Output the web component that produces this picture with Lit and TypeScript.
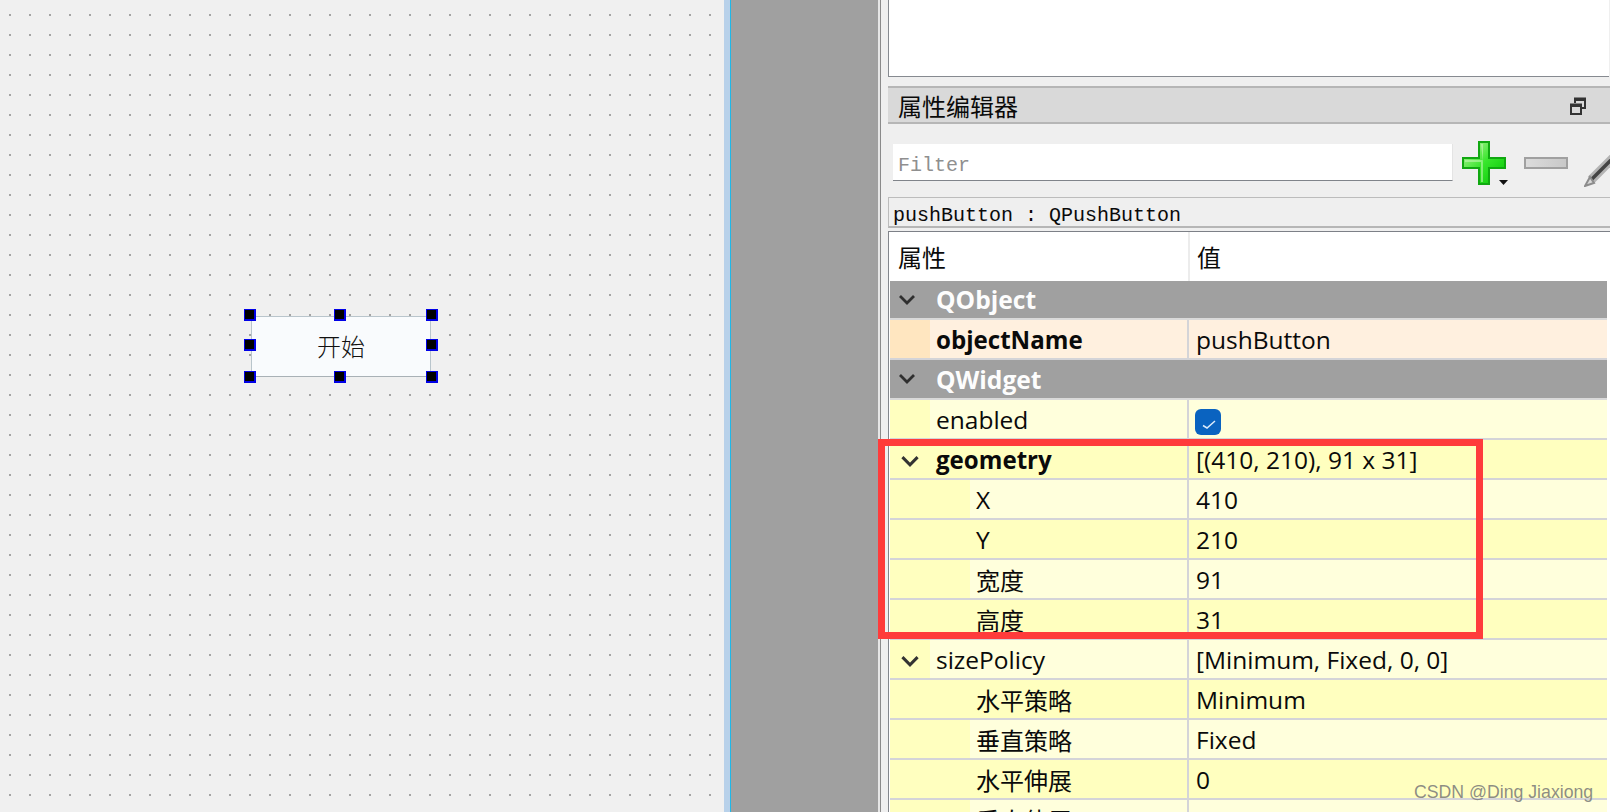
import { LitElement, html, css } from "lit";
import { customElement } from "lit/decorators.js";

type Row = {
  kind: "group" | "prop";
  name: string;
  value?: string;
  level?: number;
  bold?: boolean;
  dark?: boolean;
  orange?: boolean;
  open?: boolean;
  check?: boolean;
};

const ROWS: Row[] = [
  { kind: "group", name: "QObject" },
  { kind: "prop", name: "objectName", value: "pushButton", bold: true, orange: true },
  { kind: "group", name: "QWidget" },
  { kind: "prop", name: "enabled", check: true },
  { kind: "prop", name: "geometry", value: "[(410, 210), 91 x 31]", bold: true, dark: true, open: true },
  { kind: "prop", name: "X", value: "410", level: 1 },
  { kind: "prop", name: "Y", value: "210", level: 1, dark: true },
  { kind: "prop", name: "宽度", value: "91", level: 1 },
  { kind: "prop", name: "高度", value: "31", level: 1, dark: true },
  { kind: "prop", name: "sizePolicy", value: "[Minimum, Fixed, 0, 0]", open: true },
  { kind: "prop", name: "水平策略", value: "Minimum", level: 1, dark: true },
  { kind: "prop", name: "垂直策略", value: "Fixed", level: 1 },
  { kind: "prop", name: "水平伸展", value: "0", level: 1, dark: true },
  { kind: "prop", name: "垂直伸展", value: "0", level: 1 },
];

const HANDLES: [number, number][] = [
  [244, 309], [334, 309], [426, 309],
  [244, 339], [426, 339],
  [244, 371], [334, 371], [426, 371],
];

const chevron = (group = false) => html`<svg class=${group ? "chev" : "chev big"} width="18" height="12" viewBox="0 0 18 12">
  <path d="M2 2 L9 9 L16 2" fill="none" stroke=${group ? "#2f2f2f" : "#333"} stroke-width="2.8"/>
</svg>`;

@customElement("app-root")
export class AppRoot extends LitElement {
  static styles = css`
    :host {
      display: block;
      width: 1610px;
      height: 812px;
      overflow: hidden;
      position: relative;
      font-family: "Open Sans", "Noto Sans CJK SC", sans-serif;
      background: #efefef;
    }
    .app { display: flex; height: 812px; }
    .canvas {
      width: 724px;
      flex: none;
      position: relative;
      background-color: #f0f0f0;
    }
    .canvas::before {
      content: "";
      position: absolute;
      inset: 0;
      background: repeating-linear-gradient(90deg, transparent 0 9px, #a4a4a4 9px 11px, transparent 11px 20px);
      -webkit-mask-image: repeating-linear-gradient(180deg, transparent 0 14px, #000 14px 16px, transparent 16px 20px);
      mask-image: repeating-linear-gradient(180deg, transparent 0 14px, #000 14px 16px, transparent 16px 20px);
    }
    .btn {
      position: absolute;
      left: 251px;
      top: 316px;
      width: 180px;
      height: 61px;
      box-sizing: border-box;
      border: 1px solid #b9c5cc;
      border-bottom-color: #a9b1b6;
      background: #f9fbfd;
      display: flex;
      align-items: center;
      justify-content: center;
      padding-bottom: 3px;
      font: 300 24px "Noto Sans CJK SC", sans-serif;
      color: #111;
    }
    .handle {
      position: absolute;
      width: 12px;
      height: 12px;
      box-sizing: border-box;
      background: #000;
      border: 1px solid #0000e6;
      border-right-width: 2px;
      border-bottom-width: 2px;
    }
    .splitter {
      width: 6px;
      flex: none;
      background: #b8d1ea;
      border-right: 1px solid #1fb8e8;
    }
    .mdi {
      width: 147px;
      flex: none;
      background: #a0a0a0;
    }
    .panel {
      flex: 1;
      min-width: 0;
      box-sizing: border-box;
      border-left: 2px solid #e6e6e6;
      padding-left: 8px;
      display: flex;
      flex-direction: column;
      box-shadow: inset 1px 0 0 #8a8a8a;
    }
    .topbox {
      height: 77px;
      flex: none;
      background: #fff;
      border: 1px solid #868a90;
      border-top: 0;
      border-right-width: 0;
      box-sizing: border-box;
      margin-right: 1px;
    }
    .title {
      margin-top: 9px;
      height: 38px;
      flex: none;
      box-sizing: border-box;
      background: #d9d9d9;
      border-top: 2px solid #b6b6b6;
      border-bottom: 2px solid #b6b6b6;
      display: flex;
      align-items: center;
      justify-content: space-between;
      padding: 0 24px 0 10px;
      font: 400 24px "Noto Sans CJK SC", sans-serif;
      color: #0a0a0a;
    }
    .title svg { display: block; margin-top: 2px; }
    .toolbar {
      height: 73px;
      flex: none;
      display: flex;
      align-items: flex-start;
      box-sizing: border-box;
      padding-top: 17px;
      overflow: hidden;
    }
    .filter {
      flex: none;
      margin: 3px 0 0 5px;
      width: 560px;
      height: 37px;
      box-sizing: border-box;
      background: #fff;
      border-bottom: 1px solid #80848a;
      border-right: 1px solid #e4e4e4;
      font: 20px "Liberation Mono", monospace;
      color: #8f8f8f;
      padding: 9px 0 0 5px;
      line-height: 26px;
    }
    .icons { display: flex; flex: none; align-items: flex-start; margin-left: 9px; }
    .plus { width: 46px; height: 46px; display: block; flex: none; }
    .minus { width: 44px; height: 12px; margin: 16px 0 0 16px; display: block; flex: none; }
    .pencil { width: 30px; height: 32px; margin: 14px 0 0 16px; display: block; flex: none; }
    .objname {
      height: 31px;
      flex: none;
      box-sizing: border-box;
      border: 1px solid #bcbcbc;
      border-right: 0;
      border-bottom: 2px solid #b6b6b6;
      font: 20px/36px "Liberation Mono", monospace;
      color: #0a0a0a;
      padding-left: 4px;
      white-space: pre;
    }
    .table {
      flex: 1;
      min-height: 0;
      margin-top: 3px;
      background: #fff;
      border-top: 1px solid #7d8087;
      border-left: 1px solid #83868c;
      padding-left: 1px;
      overflow: hidden;
      display: flex;
      flex-direction: column;
    }
    .thead {
      height: 49px;
      flex: none;
      display: flex;
      font: 400 24px "Noto Sans CJK SC", sans-serif;
      color: #0a0a0a;
      margin-right: 3px;
    }
    .thead div { display: flex; align-items: center; box-sizing: border-box; }
    .thead .c1 { width: 300px; padding-left: 8px; border-right: 2px solid #ececec; }
    .thead .c2 { flex: 1; padding-left: 7px; }
    .row {
      height: 40px;
      flex: none;
      box-sizing: border-box;
      display: flex;
      border-bottom: 2px solid #d4d4d8;
      font-size: 24.5px;
      color: #0a0a0a;
      background: #ffffdc;
      margin-right: 3px;
    }
    .row.first { height: 39px; }
    .row.dark { background: #ffffbf; }
    .row.orange { background: #fff0df; }
    .row.group {
      background: #a0a0a0;
      color: #fdfdfd;
      font-weight: 700;
      font-size: 24.6px;
      border-bottom-color: #d9d9d9;
    }
    .gut {
      flex: none;
      display: flex;
      align-items: center;
      justify-content: flex-start;
      background: #ffffbf;
      width: 40px;
      padding-left: 8px;
      box-sizing: border-box;
    }
    .chev.big { margin: 4px 0 0 2px; width: 20px; height: 13px; }
    .row.orange .gut { background: #ffe6c0; }
    .row.group .gut { background: transparent; }
    .gut.l1 { width: 80px; }
    .name {
      flex: none;
      box-sizing: border-box;
      width: 259px;
      padding: 2px 0 0 6px;
      display: flex;
      align-items: center;
      line-height: 1;
      white-space: nowrap;
      border-right: 2px solid #d4d4d8;
    }
    .gut.l1 + .name { width: 219px; }
    .row.group .name { border-right: 0; flex: 1; }
    .bold { font-weight: 700; font-size: 24.1px; }
    .val {
      flex: 1;
      display: flex;
      align-items: center;
      padding-left: 7px;
      white-space: nowrap;
    }
    .cjk { font-family: "Noto Sans CJK SC", sans-serif; font-size: 24px; padding-top: 2px; }
    .check {
      width: 26px;
      height: 26px;
      border-radius: 6px;
      background: #0a63c0;
      display: flex;
      align-items: center;
      justify-content: center;
      margin: 6px 0 0 -1px;
    }
    .check svg { margin: 5px 0 0 2px; }
    .annot {
      position: absolute;
      left: 878px;
      top: 439px;
      width: 605px;
      height: 200px;
      box-sizing: border-box;
      border: 7px solid #ff3b3b;
      pointer-events: none;
    }
    .mark {
      position: absolute;
      left: 1414px;
      top: 782px;
      font: 17.7px "Liberation Sans", sans-serif;
      color: rgba(120, 120, 120, 0.85);
      white-space: nowrap;
    }
  `;

  private isCjk(s: string) {
    return /[\u4e00-\u9fff]/.test(s);
  }

  private renderRow(r: Row, i: number) {
    if (r.kind === "group") {
      return html`<div class="row group ${i === 0 ? "first" : ""}">
        <div class="gut">${chevron(true)}</div>
        <div class="name">${r.name}</div>
      </div>`;
    }
    const cls = `row ${r.dark ? "dark" : ""} ${r.orange ? "orange" : ""}`;
    return html`<div class=${cls}>
      <div class="gut ${r.level ? "l1" : ""}">${r.open ? chevron() : ""}</div>
      <div class="name ${r.bold ? "bold" : ""} ${this.isCjk(r.name) ? "cjk" : ""}">${r.name}</div>
      <div class="val">
        ${r.check
          ? html`<div class="check"><svg width="14" height="9" viewBox="0 0 14 9"><path d="M1 5.5 L5 8 L13 1" fill="none" stroke="#dcebfa" stroke-width="1.5"/></svg></div>`
          : r.value}
      </div>
    </div>`;
  }

  render() {
    return html`
      <div class="app">
        <div class="canvas">
          <div class="btn">开始</div>
          ${HANDLES.map(
            ([x, y]) => html`<div class="handle" style="left:${x}px;top:${y}px"></div>`
          )}
        </div>
        <div class="splitter"></div>
        <div class="mdi"></div>
        <div class="panel">
          <div class="topbox"></div>
          <div class="title">
            <span>属性编辑器</span>
            <svg width="16" height="18" viewBox="0 0 16 18">
              <path d="M5 6V1.5H15V11H12" fill="none" stroke="#333" stroke-width="2"/>
              <path d="M5 2.5H15" stroke="#333" stroke-width="3"/>
              <rect x="1" y="7.5" width="10" height="9.5" fill="none" stroke="#333" stroke-width="2"/>
              <path d="M1 8.5H11" stroke="#333" stroke-width="3"/>
            </svg>
          </div>
          <div class="toolbar">
            <div class="filter">Filter</div>
            <div class="icons">
              <svg class="plus" viewBox="0 0 46 46">
                <defs>
                  <linearGradient id="pg" x1="0" y1="0" x2="1" y2="1">
                    <stop offset="0" stop-color="#c4f4a8"/>
                    <stop offset="0.5" stop-color="#38e62c"/>
                    <stop offset="1" stop-color="#00c400"/>
                  </linearGradient>
                </defs>
                <path d="M17 1H27V17H43V27H27V43H17V27H1V17H17Z" fill="url(#pg)" stroke="#10a810" stroke-width="2"/>
                <path d="M19 3H21V19H3V21H19V41H21V21H21Z" fill="#c8f8b8" opacity="0.55"/>
                <path d="M37 39H46L41.5 44Z" fill="#111"/>
              </svg>
              <svg class="minus" viewBox="0 0 44 12">
                <defs>
                  <linearGradient id="mg" x1="0" y1="0" x2="1" y2="0">
                    <stop offset="0" stop-color="#dcdcdc"/>
                    <stop offset="1" stop-color="#c8c8c8"/>
                  </linearGradient>
                </defs>
                <rect x="1" y="1" width="42" height="10" fill="url(#mg)" stroke="#a0a0a0" stroke-width="2"/>
              </svg>
              <svg class="pencil" viewBox="0 0 30 32">
                <path d="M30 2 L7 25" stroke="#b4b4b4" stroke-width="9"/>
                <path d="M30 2 L7 25" stroke="#444" stroke-width="3.5"/>
                <path d="M6 22 L1 31 L10 28Z" fill="#d8d8d8" stroke="#8c8c8c" stroke-width="2"/>
              </svg>
            </div>
          </div>
          <div class="objname">pushButton : QPushButton</div>
          <div class="table">
            <div class="thead">
              <div class="c1">属性</div>
              <div class="c2">值</div>
            </div>
            ${ROWS.map((r, i) => this.renderRow(r, i))}
          </div>
        </div>
      </div>
      <div class="annot"></div>
      <div class="mark">CSDN @Ding Jiaxiong</div>
    `;
  }
}
